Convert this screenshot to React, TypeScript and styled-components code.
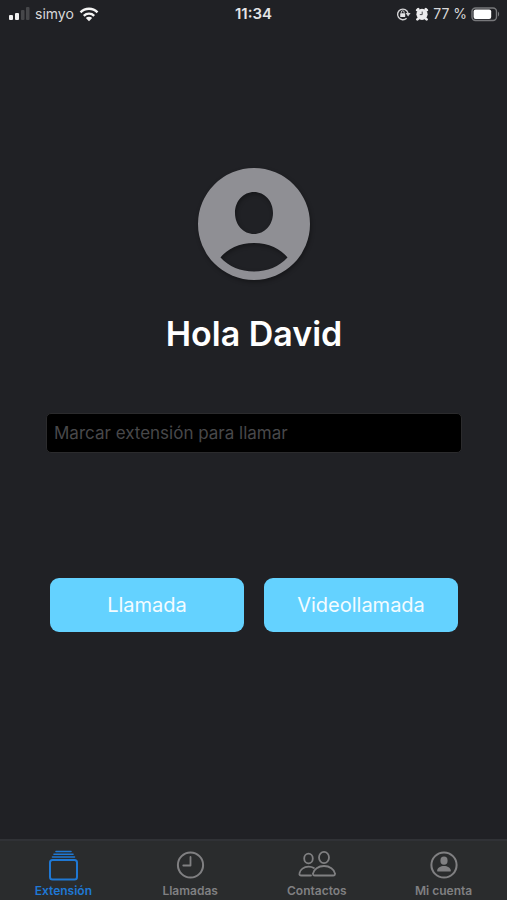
import React, { useState } from "react";
import styled, { createGlobalStyle } from "styled-components";

const GlobalStyle = createGlobalStyle`
  * { box-sizing: border-box; }
  body {
    margin: 0;
    background: #202125;
    color: #ffffff;
    font-family: Inter, "Liberation Sans", sans-serif;
  }
`;

const Screen = styled.div`
  display: flex;
  flex-direction: column;
  min-height: 100vh;
`;

const StatusBar = styled.header`
  display: grid;
  grid-template-columns: 1fr auto 1fr;
  align-items: center;
  height: 28px;
  padding: 0 7px;
  color: #d8d8da;
  font-size: 14px;
  line-height: 20px;
`;

const StatusGroup = styled.div<{ $end?: boolean }>`
  display: flex;
  align-items: center;
  justify-content: ${(p) => (p.$end ? "flex-end" : "flex-start")};
  gap: ${(p) => (p.$end ? "4px" : "5px")};
  white-space: nowrap;

  svg { flex: none; }
`;

const Clock = styled.time`
  font-size: 15px;
  font-weight: 600;
  color: #e4e4e6;
`;

const Main = styled.main`
  display: flex;
  flex: 1;
  flex-direction: column;
  padding: 138px 45px 0 46px;
`;

const Avatar = styled.svg`
  align-self: center;
  width: 116px;
  height: 116px;
  overflow: visible;
  filter: drop-shadow(1px 2px 2px rgba(0, 0, 0, 0.35));
`;

const Greeting = styled.h1`
  margin: 30px 0 0;
  font-size: 34px;
  font-weight: 600;
  line-height: 44px;
  text-align: center;
`;

const ExtensionInput = styled.input`
  width: 100%;
  height: 40px;
  margin-top: 57px;
  padding: 0 7px;
  border: 1px solid #2b2b2d;
  border-radius: 5px;
  background: #000000;
  color: #ffffff;
  font: inherit;
  font-size: 17px;

  &::placeholder { color: #48484a; opacity: 1; }
`;

const Actions = styled.div`
  display: grid;
  grid-template-columns: 1fr 1fr;
  gap: 20px;
  margin-top: 125px;
  padding: 0 4px;
`;

const ActionButton = styled.button`
  height: 54px;
  padding: 0;
  border: 0;
  border-radius: 9px;
  background: #64d2ff;
  color: #f4fcff;
  font: inherit;
  font-size: 20px;
  cursor: pointer;
`;

const TabBar = styled.nav`
  display: grid;
  grid-template-columns: repeat(4, 1fr);
  height: 61px;
  border-top: 2px solid #303236;
  background: #2a2c2d;
`;

const Tab = styled.button<{ $active: boolean }>`
  display: flex;
  flex-direction: column;
  align-items: center;
  gap: 2px;
  padding: 8px 0 0;
  border: 0;
  background: none;
  color: ${(p) => (p.$active ? "#1f78d4" : "#808082")};
  font: inherit;
  font-size: 12px;
  font-weight: 600;
  line-height: 16px;
  cursor: pointer;

  svg {
    height: 32px;
    fill: none;
    stroke: currentColor;
    stroke-width: 2;
    stroke-linecap: round;
    stroke-linejoin: round;
  }
`;

const SignalIcon = () => (
  <svg width="23" height="14" viewBox="0 0 23 14" fill="#f0f0f0" aria-label="Cobertura">
    <rect x="2" y="8" width="4" height="5" rx="1" />
    <rect x="8" y="6" width="4" height="7" rx="1" />
    <rect x="14" y="3" width="3.500" height="10" rx="1" fill="#46474a" />
    <rect x="19" y="0" width="3.500" height="13" rx="1" fill="#46474a" />
  </svg>
);

const WifiIcon = () => (
  <svg width="20" height="15" viewBox="0 0 20 15" fill="none" stroke="#f4f4f4" strokeWidth="2.4" aria-label="Wi-Fi">
    <path d="M1.500 5.300a12 12 0 0 1 17 0" />
    <path d="M4.800 8.800a7.400 7.400 0 0 1 10.400 0" />
    <path d="M10 14.300 6.800 11.100a4.600 4.600 0 0 1 6.400 0Z" fill="#f4f4f4" stroke="none" />
  </svg>
);

const LockIcon = () => (
  <svg width="15" height="14" viewBox="0 0 15 14" fill="none" stroke="#d4d4d6" strokeWidth="1.4" aria-label="Rotación bloqueada">
    <path d="M10.600 11.200A5.300 5.300 0 1 1 12 6" />
    <path d="M9.600 6h5l-2.500 3.600Z" fill="#d4d4d6" stroke="none" />
    <rect x="4.200" y="6.300" width="5" height="3.700" rx=".5" fill="#e4e4e6" stroke="none" />
    <path d="M5.300 6.300V5.200a1.400 1.400 0 0 1 2.800 0v1.100" strokeWidth="1" />
  </svg>
);

const AlarmIcon = () => (
  <svg width="14" height="14" viewBox="0 0 14 14" aria-label="Alarma">
    <g stroke="#ececee" strokeWidth="2.6" strokeLinecap="round">
      <path d="M2.200 3.200 3.200 2.200M11.800 3.200 10.800 2.200M3.200 11.600l-.8.8M10.800 11.600l.8.8" />
    </g>
    <circle cx="7" cy="7.300" r="5.600" fill="#ececee" />
    <path d="M7.200 4.600v3H4.800" fill="none" stroke="#4a4b4f" strokeWidth="1" />
  </svg>
);

const BatteryIcon = () => (
  <svg width="29" height="15" viewBox="0 0 29 15" aria-label="Batería">
    <rect x="1" y="1" width="24.500" height="12.500" rx="3.500" fill="none" stroke="#77787b" strokeWidth="1.400" />
    <rect x="2.600" y="2.600" width="17.600" height="9.300" rx="2" fill="#ffffff" />
    <path d="M27 4.800c1.500.6 1.500 4 0 4.600Z" fill="#77787b" />
  </svg>
);

const StackIcon = () => (
  <svg width="32" viewBox="0 0 32 32">
    <path d="M9 2.500h15M7 5.300h19M5.500 8h22" strokeWidth="1.600" />
    <rect x="3" y="11" width="27" height="19.500" rx="2.500" />
  </svg>
);

const ClockIcon = () => (
  <svg width="32" viewBox="0 0 32 32">
    <circle cx="16.500" cy="16" r="12.600" />
    <path d="M16.500 8v8.500H9.300" strokeWidth="1.800" />
  </svg>
);

const PeopleIcon = () => (
  <svg width="40" viewBox="0 0 40 32">
    <ellipse cx="11.500" cy="9.500" rx="4.300" ry="4.800" strokeWidth="1.800" />
    <ellipse cx="27" cy="8.500" rx="5" ry="5.700" strokeWidth="1.800" />
    <path d="M14 26.500H4.400c-1.700 0-2.200-.8-1.900-2.300.6-3.500 4.300-6.500 9-6.500 2.200 0 4 .5 5.400 1.400" strokeWidth="1.800" />
    <path d="M27 17c-5.800 0-10.200 3.300-10.900 7.300-.3 1.500.2 2.200 1.800 2.200h18.200c1.600 0 2.100-.7 1.800-2.200C37.200 20.300 32.800 17 27 17Z" strokeWidth="1.800" />
  </svg>
);

const AccountIcon = () => (
  <svg width="32" viewBox="0 0 32 32">
    <circle cx="16" cy="16" r="12.600" />
    <ellipse cx="16" cy="11.700" rx="3.600" ry="4.100" fill="currentColor" stroke="none" />
    <path d="M10 22.500c-.8 0-1-.5-.8-1.300.5-2.500 3.200-4.200 6.800-4.200s6.300 1.700 6.800 4.200c.2.800 0 1.300-.8 1.300Z" fill="currentColor" stroke="none" />
  </svg>
);

const tabs = [
  { label: "Extensión", Icon: StackIcon },
  { label: "Llamadas", Icon: ClockIcon },
  { label: "Contactos", Icon: PeopleIcon },
  { label: "Mi cuenta", Icon: AccountIcon },
];

export default function App() {
  const [active, setActive] = useState("Extensión");
  const [extension, setExtension] = useState("");

  return (
    <>
      <GlobalStyle />
      <Screen>
        <StatusBar>
          <StatusGroup>
            <SignalIcon />
            <span>simyo</span>
            <WifiIcon />
          </StatusGroup>
          <Clock>11:34</Clock>
          <StatusGroup $end>
            <LockIcon />
            <AlarmIcon />
            <span>77 %</span>
            <BatteryIcon />
          </StatusGroup>
        </StatusBar>
        <Main>
          <Avatar viewBox="0 0 116 116" aria-hidden="true">
            <path
              fill="#8f8f94"
              fillRule="evenodd"
              d="M58 2a56 56 0 1 0 0 112A56 56 0 0 0 58 2ZM58 26c10.600 0 19 9 19 21S68.600 68 58 68 39 59 39 47s8.400-21 19-21ZM24.500 91.500C31 83 43.500 77 58 77s27 6 33.500 14.500C83 100.500 71.500 105.500 58 105.500S33 100.500 24.500 91.500Z"
            />
          </Avatar>
          <Greeting>Hola David</Greeting>
          <ExtensionInput
            type="text"
            inputMode="tel"
            aria-label="Marcar extensión para llamar"
            placeholder="Marcar extensión para llamar"
            value={extension}
            onChange={(e) => setExtension(e.target.value)}
          />
          <Actions>
            <ActionButton type="button">Llamada</ActionButton>
            <ActionButton type="button">Videollamada</ActionButton>
          </Actions>
        </Main>
        <TabBar>
          {tabs.map(({ label, Icon }) => (
            <Tab
              key={label}
              type="button"
              $active={active === label}
              aria-current={active === label ? "page" : undefined}
              onClick={() => setActive(label)}
            >
              <Icon />
              {label}
            </Tab>
          ))}
        </TabBar>
      </Screen>
    </>
  );
}
